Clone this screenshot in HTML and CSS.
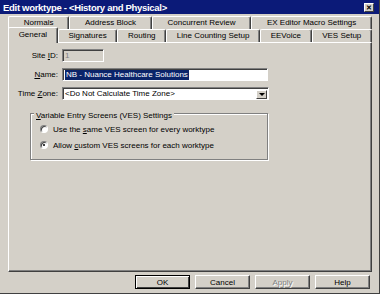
FILE: index.html
```html
<!DOCTYPE html>
<html lang="en">
<head>
  <meta charset="UTF-8" />
  <title>Edit worktype</title>
  <link rel="stylesheet" href="styles.css">
</head>
<body>

  <div class="window">
    <div class="titlebar">
      <span class="title">Edit worktype - &lt;History and Physical&gt;</span>
      <span class="close">&#x2715;</span>
    </div>

    <div class="client">
      <!-- two rows of tabs, General is the open one -->
      <div class="tab-row">
        <div class="tab">Normals</div>
        <div class="tab">Address Block</div>
        <div class="tab">Concurrent Review</div>
        <div class="tab">EX Editor Macro Settings</div>
      </div>
      <div class="tab-row">
        <div class="tab active">General</div>
        <div class="tab">Signatures</div>
        <div class="tab">Routing</div>
        <div class="tab">Line Counting Setup</div>
        <div class="tab">EEVoice</div>
        <div class="tab">VES Setup</div>
      </div>

      <div class="panel">
        <div class="fields">
          <label>Site <u>I</u>D:</label>
          <div class="edit disabled site">1</div>

          <label><u>N</u>ame:</label>
          <div class="edit name"><span class="selected">NB - Nuance Healthcare Solutions</span></div>

          <label>Time <u>Z</u>one:</label>
          <div class="edit combo">
            <span>&lt;Do Not Calculate Time Zone&gt;</span>
            <span class="drop"></span>
          </div>
        </div>

        <div class="group">
          <span class="legend"><u>V</u>ariable Entry Screens (VES) Settings</span>
          <div class="option"><span class="radio"></span><span>Use the <u>s</u>ame VES screen for every worktype</span></div>
          <div class="option"><span class="radio checked"></span><span>Allow <u>c</u>ustom VES screens for each worktype</span></div>
        </div>
      </div>

      <div class="buttons">
        <button class="btn default">OK</button>
        <button class="btn">Cancel</button>
        <button class="btn disabled">Apply</button>
        <button class="btn">Help</button>
      </div>
    </div>
  </div>

</body>
</html>
```

FILE: styles.css
```css
body {
  margin: 0;
  background: #fff;
  font-family: "Liberation Sans", Arial, sans-serif;
  font-size: 8px;
  color: #000;
}

.window {
  width: 380px;
  height: 294px;
  box-sizing: border-box;
  background: #d4d0c8;
  border-right: 1px solid #404040;
  border-bottom: 1px solid #404040;
  display: flex;
  flex-direction: column;
}

.titlebar {
  height: 14px;
  background: #0b1a78;
  color: #fff;
  display: flex;
  align-items: center;
  justify-content: space-between;
  padding: 0 5px 0 3px;
}
.title {
  font-weight: bold;
  font-size: 9.5px;
  letter-spacing: -0.3px;
}
.close {
  width: 10px;
  height: 9px;
  box-sizing: border-box;
  background: #d4d0c8;
  color: #000;
  border: 1px solid;
  border-color: #fff #404040 #404040 #fff;
  font-size: 7px;
  font-weight: bold;
  line-height: 7px;
  text-align: center;
}

.client {
  flex: 1;
  padding: 2px 7px 0 8px;
  display: flex;
  flex-direction: column;
}

/* tabs */
.tab-row {
  display: flex;
  height: 13px;
}
.tab {
  flex: 1 1 auto;
  padding: 0 6px;
  text-align: center;
  line-height: 12px;
  white-space: nowrap;
  border-top: 1px solid #fff;
  border-left: 1px solid #fff;
  border-right: 1px solid #404040;
  box-shadow: inset -1px 0 #808080;
  border-radius: 2px 2px 0 0;
  background: #d4d0c8;
}
.tab.active {
  position: relative;
  z-index: 1;
  height: 15px;
  margin-top: -2px;
  line-height: 14px;
}

.panel {
  height: 230px;
  box-sizing: border-box;
  border: 1px solid;
  border-color: #fff #404040 #404040 #fff;
  box-shadow: inset -1px -1px #808080;
  padding: 6px 0 0 3px;
}

.fields {
  display: grid;
  grid-template-columns: 46px auto;
  column-gap: 4px;
  row-gap: 6px;
  align-items: center;
}
.fields label {
  text-align: right;
  white-space: nowrap;
}

.edit {
  height: 13px;
  box-sizing: border-box;
  background: #fff;
  border: 1px solid;
  border-color: #808080 #fff #fff #808080;
  box-shadow: inset 1px 1px #404040;
  padding: 1px 0 0 2px;
  line-height: 10px;
  white-space: nowrap;
  display: flex;
  align-items: center;
}
.edit.disabled {
  background: #d4d0c8;
  color: #808080;
}
.site { width: 42px; }
.name { width: 206px; }
.combo {
  width: 207px;
  justify-content: space-between;
  padding-right: 1px;
}
.selected {
  background: #0a246a;
  color: #fff;
  padding: 0 1px;
}
.drop {
  width: 11px;
  height: 9px;
  box-sizing: border-box;
  border: 1px solid;
  border-color: #fff #404040 #404040 #fff;
  background: #d4d0c8;
  display: flex;
  align-items: center;
  justify-content: center;
}
.drop::after {
  content: "";
  border-left: 3px solid transparent;
  border-right: 3px solid transparent;
  border-top: 3px solid #000;
}

/* group box */
.group {
  position: relative;
  width: 238px;
  height: 47px;
  box-sizing: border-box;
  margin: 13px 0 0 18px;
  border: 1px solid #808080;
  box-shadow: 1px 1px 0 #fff, inset 1px 1px 0 #fff;
  padding: 7px 0 0 9px;
}
.legend {
  position: absolute;
  top: -3px;
  left: 3px;
  padding: 0 2px;
  line-height: 10px;
  background: #d4d0c8;
  white-space: nowrap;
}
.option {
  display: flex;
  align-items: center;
  gap: 5px;
  height: 16px;
  white-space: nowrap;
}
.radio {
  position: relative;
  width: 8px;
  height: 8px;
  box-sizing: border-box;
  border-radius: 50%;
  background: #fff;
  border: 1px solid;
  border-color: #808080 #fff #fff #808080;
  box-shadow: inset 1px 1px #404040;
}
.radio.checked::after {
  content: "";
  position: absolute;
  left: 2px;
  top: 2px;
  width: 2px;
  height: 2px;
  background: #000;
  border-radius: 50%;
}

/* dialog buttons */
.buttons {
  display: flex;
  justify-content: flex-end;
  gap: 5px;
  padding: 3px 2px 0 0;
}
.btn {
  width: 55px;
  height: 14px;
  padding: 0;
  background: #d4d0c8;
  font-family: inherit;
  font-size: 8px;
  color: #000;
  border: 1px solid;
  border-color: #fff #404040 #404040 #fff;
  box-shadow: inset -1px -1px #808080;
  border-radius: 0;
}
.btn.default {
  border-color: #000;
  box-shadow: inset 1px 1px #fff, inset -1px -1px #404040;
}
.btn.disabled {
  color: #808080;
  text-shadow: 1px 1px #fff;
}
```
